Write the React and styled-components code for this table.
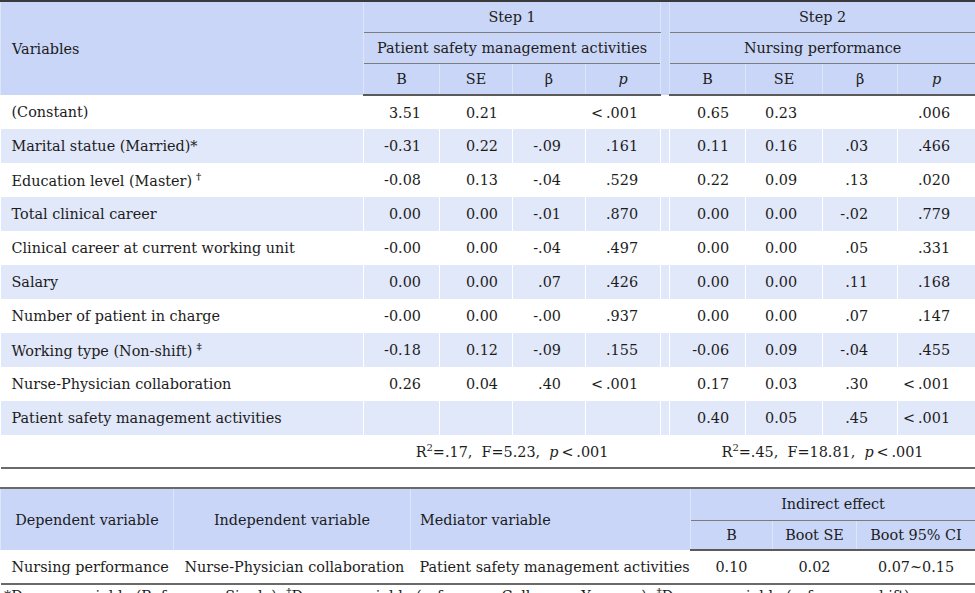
import React from "react";
import styled, {createGlobalStyle} from "styled-components";

const SERIF = `"DejaVu Serif", "Liberation Serif", serif`;

const GlobalStyle = createGlobalStyle`
  body {
    margin: 0;
    background: #fff;
    font-family: ${SERIF};
    color: #1c1c1c;
  }
`;

const HEAD_BG = "#c9d6f7";
const STRIPE_BG = "#e1e8fa";
const HEAD_SEP = "#dde5f9";

const step1Pad = [18, 14, 24, 22];
const step2Pad = [16, 25, 29, 25];

const rows = [
    {label: "(Constant)", s1: ["3.51", "0.21", "", "< .001"], s2: ["0.65", "0.23", "", ".006"]},
    {label: "Marital statue (Married)", mark: "*", s1: ["-0.31", "0.22", "-.09", ".161"], s2: ["0.11", "0.16", ".03", ".466"]},
    {label: "Education level (Master)", mark: "†", sup: true, s1: ["-0.08", "0.13", "-.04", ".529"], s2: ["0.22", "0.09", ".13", ".020"]},
    {label: "Total clinical career", s1: ["0.00", "0.00", "-.01", ".870"], s2: ["0.00", "0.00", "-.02", ".779"]},
    {label: "Clinical career at current working unit", s1: ["-0.00", "0.00", "-.04", ".497"], s2: ["0.00", "0.00", ".05", ".331"]},
    {label: "Salary", s1: ["0.00", "0.00", ".07", ".426"], s2: ["0.00", "0.00", ".11", ".168"]},
    {label: "Number of patient in charge", s1: ["-0.00", "0.00", "-.00", ".937"], s2: ["0.00", "0.00", ".07", ".147"]},
    {label: "Working type (Non-shift)", mark: "‡", sup: true, s1: ["-0.18", "0.12", "-.09", ".155"], s2: ["-0.06", "0.09", "-.04", ".455"]},
    {label: "Nurse-Physician collaboration", s1: ["0.26", "0.04", ".40", "< .001"], s2: ["0.17", "0.03", ".30", "< .001"]},
    {label: "Patient safety management activities", s1: ["", "", "", ""], s2: ["0.40", "0.05", ".45", "< .001"]},
];

const Pval = ({value}) => value.startsWith("<")
    ? <span>&lt;&thinsp;{value.slice(2)}</span>
    : <span>{value}</span>;

export default function App() {
    return <Page>
        <GlobalStyle/>
        <StatTable>
            <colgroup>
                <col style={{width: 363}}/>
                <col style={{width: 76}}/>
                <col style={{width: 73}}/>
                <col style={{width: 73}}/>
                <col style={{width: 75}}/>
                <col style={{width: 9}}/>
                <col style={{width: 76}}/>
                <col style={{width: 77}}/>
                <col style={{width: 75}}/>
                <col style={{width: 78}}/>
            </colgroup>
            <thead>
            <HeadRow $height={31}>
                <HeadCell rowSpan={3} $align="left">Variables</HeadCell>
                <HeadCell colSpan={4} $rule>Step 1</HeadCell>
                <Spacer rowSpan={3}/>
                <HeadCell colSpan={4} $rule>Step 2</HeadCell>
            </HeadRow>
            <HeadRow $height={31}>
                <HeadCell colSpan={4} $rule>Patient safety management activities</HeadCell>
                <HeadCell colSpan={4} $rule>Nursing performance</HeadCell>
            </HeadRow>
            <HeadRow $height={32} $last>
                <HeadCell>B</HeadCell>
                <HeadCell>SE</HeadCell>
                <HeadCell>β</HeadCell>
                <HeadCell><i>p</i></HeadCell>
                <HeadCell>B</HeadCell>
                <HeadCell>SE</HeadCell>
                <HeadCell>β</HeadCell>
                <HeadCell><i>p</i></HeadCell>
            </HeadRow>
            </thead>
            <tbody>
            {rows.map((row, i) => (
                <BodyRow key={row.label} $striped={i % 2 === 1}>
                    <LabelCell>
                        {row.label}
                        {row.mark && (row.sup ? <Mark>{row.mark}</Mark> : row.mark)}
                    </LabelCell>
                    {row.s1.map((v, j) => <NumCell key={"a" + j} $pad={step1Pad[j]}><Pval value={v}/></NumCell>)}
                    <NumCell $pad={0}/>
                    {row.s2.map((v, j) => <NumCell key={"b" + j} $pad={step2Pad[j]}><Pval value={v}/></NumCell>)}
                </BodyRow>
            ))}
            <FitRow>
                <td/>
                <td colSpan={4}>R<sup>2</sup>=.17,&nbsp; F=5.23,&nbsp; <i>p</i>&thinsp;&lt;&thinsp;.001</td>
                <td/>
                <td colSpan={4}>R<sup>2</sup>=.45,&nbsp; F=18.81,&nbsp; <i>p</i>&thinsp;&lt;&thinsp;.001</td>
            </FitRow>
            </tbody>
        </StatTable>

        <EffectTable>
            <colgroup>
                <col style={{width: 173}}/>
                <col style={{width: 237}}/>
                <col style={{width: 280}}/>
                <col style={{width: 82}}/>
                <col style={{width: 84}}/>
                <col style={{width: 119}}/>
            </colgroup>
            <thead>
            <HeadRow $height={32}>
                <HeadCell rowSpan={2}>Dependent variable</HeadCell>
                <HeadCell rowSpan={2}>Independent variable</HeadCell>
                <HeadCell rowSpan={2} $align="left" $indent={9}>Mediator variable</HeadCell>
                <HeadCell colSpan={3} $rule>Indirect effect</HeadCell>
            </HeadRow>
            <HeadRow $height={30} $last>
                <HeadCell>B</HeadCell>
                <HeadCell>Boot SE</HeadCell>
                <HeadCell>Boot 95% CI</HeadCell>
            </HeadRow>
            </thead>
            <tbody>
            <EffectRow>
                <td>Nursing performance</td>
                <td>Nurse-Physician collaboration</td>
                <td>Patient safety management activities</td>
                <td className="num">0.10</td>
                <td className="num">0.02</td>
                <td className="num">0.07~0.15</td>
            </EffectRow>
            </tbody>
        </EffectTable>

        <Footnote>
            *Dummy variable (Reference: Single); <sup>†</sup>Dummy variable (reference: College or Younger); <sup>‡</sup>Dummy variable (reference: shift).
        </Footnote>
    </Page>;
}

const Page = styled.div`
  width: 975px;
  overflow: hidden;
  font-family: ${SERIF};
`;

const StatTable = styled.table`
  width: 975px;
  border-collapse: collapse;
  table-layout: fixed;
  font-family: ${SERIF};
  font-size: 14.4px;
  color: #1c1c1c;
  border-top: 2px solid #3a3a3a;
  border-bottom: 2px solid #6a6a6a;
`;

const EffectTable = styled(StatTable)`
  margin-top: 18px;
  border-top: 2px solid #6a6a6a;
`;

const HeadRow = styled.tr`
  height: ${props => props.$height}px;

  th {
    border-bottom: ${props => props.$last ? "2px solid #5a5a5a" : "none"};
  }
`;

const HeadCell = styled.th`
  background: ${HEAD_BG};
  font-weight: 400;
  text-align: ${props => props.$align || "center"};
  padding: 0 0 0 ${props => props.$indent || (props.$align === "left" ? 11 : 0)}px;
  border-left: 1px solid ${HEAD_SEP};
  border-right: 1px solid ${HEAD_SEP};
  white-space: nowrap;

  ${HeadRow} && {
    border-bottom: ${props => props.$rule ? "1px solid #7c7c7c" : undefined};
  }
`;

const Spacer = styled.th`
  background: ${HEAD_BG};
  border-left: 1px solid ${HEAD_SEP};
  border-right: 1px solid ${HEAD_SEP};
  padding: 0;
`;

const BodyRow = styled.tr`
  height: 34px;
  background: ${props => props.$striped ? STRIPE_BG : "#fff"};
`;

const LabelCell = styled.td`
  padding: 0 0 0 11px;
  border-right: 1px solid #fff;
  white-space: nowrap;
`;

const Mark = styled.sup`
  font-size: 10px;
  margin-left: 4px;
  font-weight: 700;
`;

const NumCell = styled.td`
  text-align: right;
  padding: 0 ${props => props.$pad}px 0 0;
  border-right: 1px solid #fff;
  white-space: nowrap;
`;

const FitRow = styled.tr`
  height: 33px;

  td {
    text-align: center;
    padding: 0;
    white-space: nowrap;
  }

  sup {
    font-size: 10px;
  }
`;

const EffectRow = styled.tr`
  height: 34px;

  td {
    padding: 0 0 0 11px;
    white-space: nowrap;
  }

  td:nth-child(3) {
    padding-left: 9px;
  }

  td.num {
    text-align: center;
    padding: 0;
  }
`;

const Footnote = styled.p`
  margin: 1px 0 0 4px;
  font-family: ${SERIF};
  font-size: 14.4px;
  white-space: nowrap;

  sup {
    font-size: 10px;
    font-weight: 700;
  }
`;
